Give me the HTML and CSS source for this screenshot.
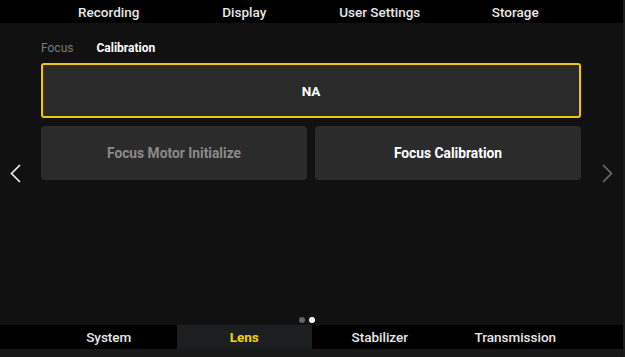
FILE: index.html
```html
<!DOCTYPE html>
<html lang="en">
<head>
    <meta charset="UTF-8">
    <meta name="viewport" content="width=device-width, initial-scale=1.0">
    <title>Lens</title>
    <link rel="stylesheet" href="styles.css">
</head>
<body>
    <div class="tela">
        <!-- Abas de cima -->
        <div class="abas abas-topo">
            <div class="aba">Recording</div>
            <div class="aba">Display</div>
            <div class="aba">User Settings</div>
            <div class="aba">Storage</div>
        </div>

        <div class="sub-abas">
            <span class="sub-aba">Focus</span>
            <span class="sub-aba ativa">Calibration</span>
        </div>

        <div class="meio">
            <div class="seta seta-esq">
                <svg width="11" height="19" viewBox="0 0 11 19"><path d="M10 1 L1.5 9.5 L10 18" fill="none" stroke="#f2f2f2" stroke-width="1.6"/></svg>
            </div>

            <div class="conteudo">
                <div class="botao selecionado">NA</div>
                <div class="linha">
                    <div class="botao desativado">Focus Motor Initialize</div>
                    <div class="botao">Focus Calibration</div>
                </div>
            </div>

            <div class="seta seta-dir">
                <svg width="11" height="19" viewBox="0 0 11 19"><path d="M1 1 L9.5 9.5 L1 18" fill="none" stroke="#6e6e6e" stroke-width="1.6"/></svg>
            </div>
        </div>

        <div class="pontos">
            <span class="ponto"></span>
            <span class="ponto ligado"></span>
        </div>

        <!-- Abas de baixo -->
        <div class="abas abas-base">
            <div class="aba">System</div>
            <div class="aba atual">Lens</div>
            <div class="aba">Stabilizer</div>
            <div class="aba">Transmission</div>
        </div>
        <div class="rodape"></div>
    </div>
</body>
</html>
```

FILE: styles.css
```css
* {
    margin: 0;
    padding: 0;
    box-sizing: border-box;
}

body {
    background-color: #111111;
    font-family: Roboto, "Liberation Sans", sans-serif;
}

.tela {
    width: 625px;
    height: 357px;
    display: flex;
    flex-direction: column;
    background-color: #111111;
    border-right: 2px solid #1c1c1c;
}

.abas {
    display: grid;
    grid-template-columns: repeat(4, 1fr);
    padding: 0 40px 0 41px;
    background-color: #000000;
}

.aba {
    display: flex;
    align-items: center;
    justify-content: center;
    font-size: 13.5px;
    font-weight: 500;
    color: #e8e8e8;
}

.abas-topo {
    height: 23px;
}

.abas-base {
    height: 24px;
}

.abas-base .atual {
    background-color: #1c1f1f;
    color: #f5d20a;
    font-weight: 700;
}

.sub-abas {
    display: flex;
    gap: 23px;
    padding: 18px 0 0 41px;
    height: 40px;
    font-size: 12px;
}

.sub-aba {
    color: #7a7a7a;
}

.sub-aba.ativa {
    color: #ffffff;
    font-weight: 700;
}

.meio {
    display: flex;
    align-items: flex-start;
}

.seta {
    width: 41px;
    padding-top: 101px;
    display: flex;
}

.seta-esq {
    padding-left: 10px;
}

.seta-dir {
    padding-left: 21px;
    width: 42px;
}

.conteudo {
    flex: 1;
    display: flex;
    flex-direction: column;
    gap: 8px;
}

.linha {
    display: grid;
    grid-template-columns: 1fr 1fr;
    gap: 8px;
}

.botao {
    height: 54px;
    background-color: #2b2b2b;
    border-radius: 4px;
    display: flex;
    align-items: center;
    justify-content: center;
    color: #ffffff;
    font-size: 13.8px;
    font-weight: 700;
}

.botao.selecionado {
    height: 55px;
    border: 2px solid #f0c60e;
    border-radius: 3px;
    background-color: #2a2a2a;
    font-size: 13.5px;
}

.botao.desativado {
    color: #8a8a8a;
}

.pontos {
    margin-top: auto;
    display: flex;
    justify-content: center;
    gap: 4px;
    padding: 0 9px 2px 0;
}

.ponto {
    width: 6px;
    height: 6px;
    border-radius: 50%;
    background-color: #666666;
}

.ponto.ligado {
    background-color: #ffffff;
}

.rodape {
    height: 8px;
    background-color: #19191a;
}
```
